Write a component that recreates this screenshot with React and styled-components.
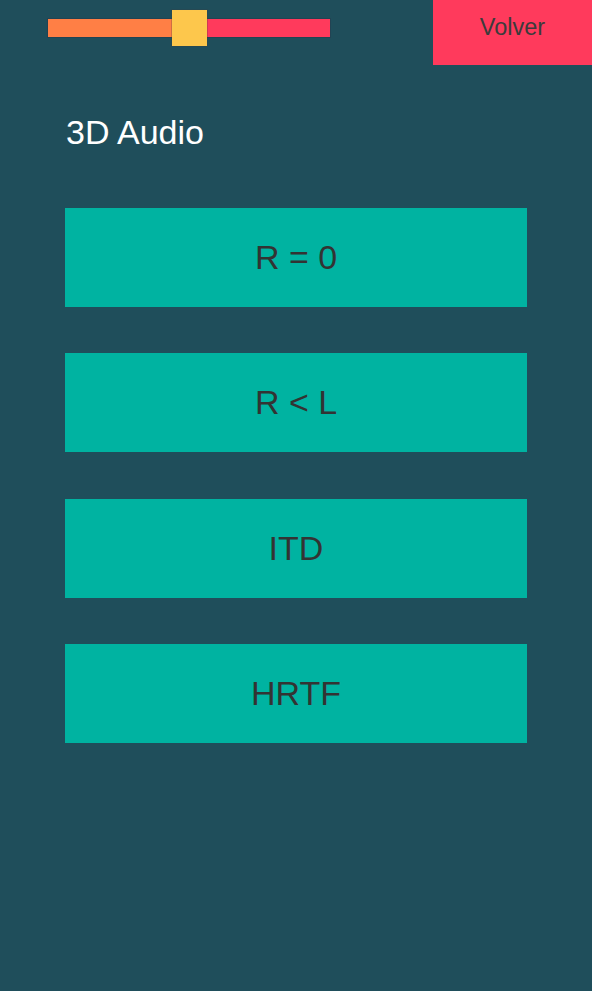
import React from "react";
import styled, { createGlobalStyle } from "styled-components";

const Global = createGlobalStyle`
  html, body { margin: 0; padding: 0; background: #1f4e5b; }
  body { font-family: "Liberation Sans", Arial, sans-serif; }
`;

const Page = styled.div`
  min-height: 100vh;
  background: #1f4e5b;
  display: flex;
  flex-direction: column;
`;

const TopBar = styled.div`
  display: flex;
  justify-content: space-between;
  align-items: flex-start;
  height: 65px;
`;

const Slider = styled.div`
  position: relative;
  width: 282px;
  height: 36px;
  margin-left: 48px;
  margin-top: 10px;
`;

const Track = styled.div`
  display: flex;
  margin-top: 9px;
  height: 18px;
  box-shadow: 0 0 0 1px rgba(40, 50, 70, 0.35);
`;

const Segment = styled.div`
  height: 100%;
  background: ${(p) => p.$color};
  flex: ${(p) => (p.$grow ? "1 1 auto" : "0 0 auto")};
`;

const Thumb = styled.div`
  position: absolute;
  top: 0;
  width: 35px;
  height: 36px;
  background: #fdc74c;
  box-shadow: 0 0 0 1px rgba(60, 60, 60, 0.25);
`;

const BackButton = styled.button`
  width: 159px;
  height: 65px;
  border: none;
  padding: 0 0 10px 0;
  background: #ff3a5c;
  color: #3b3b3b;
  font-family: "Liberation Sans", Arial, sans-serif;
  font-size: 23.5px;
  cursor: pointer;
`;

const Title = styled.h1`
  margin: 48px 0 0 66px;
  font-size: 34px;
  font-weight: normal;
  line-height: normal;
  color: #ffffff;
`;

const ButtonList = styled.div`
  display: flex;
  flex-direction: column;
  gap: 46.33px;
  margin: 56px 0 0 65px;
  width: 462px;
`;

const ModeButton = styled.button`
  height: 99px;
  border: none;
  padding: 0;
  background: #00b3a1;
  color: #333333;
  font-family: "Liberation Sans", Arial, sans-serif;
  font-size: 34px;
  cursor: pointer;
`;

const modes = ["R = 0", "R < L", "ITD", "HRTF"];

export default function App() {
  const fill = 124;
  return (
    <Page>
      <Global />
      <TopBar>
        <Slider>
          <Track>
            <Segment $color="#ff7f45" style={{ width: fill }} />
            <Segment $color="#ff3a5c" $grow />
          </Track>
          <Thumb style={{ left: fill }} />
        </Slider>
        <BackButton>Volver</BackButton>
      </TopBar>
      <Title>3D Audio</Title>
      <ButtonList>
        {modes.map((m) => (
          <ModeButton key={m}>{m}</ModeButton>
        ))}
      </ButtonList>
    </Page>
  );
}
